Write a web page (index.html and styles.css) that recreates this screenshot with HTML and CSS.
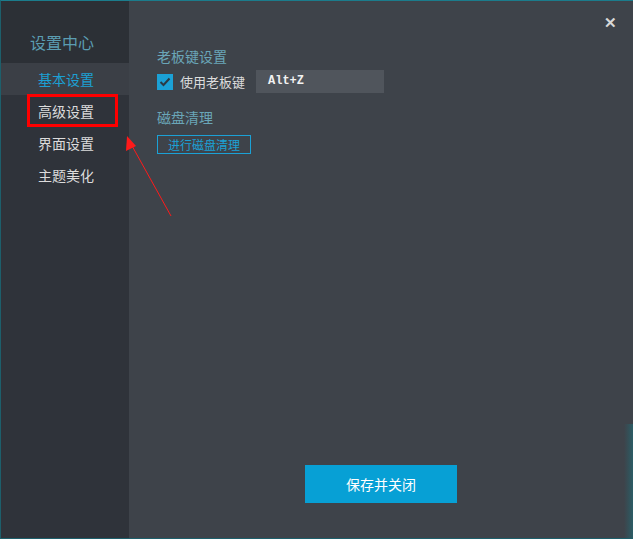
FILE: index.html
```html
<!DOCTYPE html>
<html lang="zh-CN">
<head>
    <meta charset="UTF-8">
    <title>设置中心</title>
    <link rel="stylesheet" href="styles.css">
</head>
<body>
    <div class="window">
        <!-- 左侧导航 -->
        <aside class="sidebar">
            <div class="sidebar-title">设置中心</div>
            <ul class="nav">
                <li class="nav-item active">基本设置</li>
                <li class="nav-item marked">高级设置</li>
                <li class="nav-item">界面设置</li>
                <li class="nav-item">主题美化</li>
            </ul>
        </aside>

        <main class="panel">
            <section class="group">
                <h3 class="group-title">老板键设置</h3>
                <div class="row">
                    <label class="check">
                        <span class="check-box">
                            <svg width="12" height="10" viewBox="0 0 12 10"><path d="M1.5 5 L4.5 8 L10.5 1.5" fill="none" stroke="#2b3a44" stroke-width="2"/></svg>
                        </span>
                        使用老板键
                    </label>
                    <div class="hotkey">Alt+Z</div>
                </div>
            </section>

            <section class="group">
                <h3 class="group-title">磁盘清理</h3>
                <button class="btn-line">进行磁盘清理</button>
            </section>

            <button class="btn-save">保存并关闭</button>
        </main>

        <span class="close">&#x2715;</span>
        <div class="edge-glow"></div>

        <!-- 标注箭头 -->
        <svg class="arrow" width="633" height="539" viewBox="0 0 633 539">
            <line x1="171" y1="216" x2="131" y2="144" stroke="#ff1a1a" stroke-width="1"/>
            <polygon points="127,136 126,151 136,146" fill="#ff1a1a"/>
        </svg>
    </div>
</body>
</html>
```

FILE: styles.css
```css
*, *::before, *::after {
    box-sizing: border-box;
}
body {
    margin: 0;
    font-family: "Noto Sans CJK SC", "Liberation Sans", sans-serif;
    background-color: #3e434a;
}
.window {
    position: relative;
    display: flex;
    width: 633px;
    height: 539px;
    background-color: #3e434a;
    border-top: 1px solid #1b7c8c;
    border-left: 1px solid #1d5f6b;
    border-bottom: 1px solid #1d5f6b;
    overflow: hidden;
}

/* 左侧导航 */
.sidebar {
    width: 128px;
    flex-shrink: 0;
    background-color: #2f333a;
}
.sidebar-title {
    height: 62px;
    padding: 29px 0 0 29px;
    font-size: 16px;
    line-height: 24px;
    color: #5b9db2;
    background-color: #2c3036;
}
.nav {
    list-style: none;
    margin: 0;
    padding: 0;
}
.nav-item {
    position: relative;
    height: 32px;
    padding-left: 37px;
    font-size: 14px;
    line-height: 32px;
    color: #dcdcdc;
}
.nav-item.active {
    color: #1ba0d4;
    background-color: #3b3f46;
}
.nav-item.marked::after {
    content: "";
    position: absolute;
    left: 26px;
    top: -1px;
    width: 91px;
    height: 33px;
    border: 3px solid #ff0000;
}

/* 右侧设置面板 */
.panel {
    flex: 1;
    display: flex;
    flex-direction: column;
    padding: 45px 0 35px 28px;
}
.group {
    margin-bottom: 14px;
}
.group-title {
    margin: 0 0 4px;
    font-size: 14px;
    font-weight: normal;
    line-height: 20px;
    color: #6aa6b8;
}
.row {
    display: flex;
    align-items: center;
    gap: 11px;
}
.check {
    display: flex;
    align-items: center;
    gap: 7px;
    font-size: 13px;
    color: #dddddd;
}
.check-box {
    display: flex;
    align-items: center;
    justify-content: center;
    width: 16px;
    height: 16px;
    background-color: #1ba1d6;
}
.hotkey {
    width: 128px;
    height: 23px;
    padding-left: 12px;
    font-family: "Liberation Mono", monospace;
    font-size: 12px;
    font-weight: bold;
    line-height: 23px;
    color: #f2f2f2;
    background-color: #50555c;
}
.btn-line {
    width: 94px;
    height: 19px;
    padding: 0;
    font-family: inherit;
    font-size: 12px;
    line-height: 17px;
    color: #1ba1d6;
    background: transparent;
    border: 1px solid #1ba1d6;
}
.btn-save {
    margin-top: auto;
    align-self: center;
    margin-left: -28px;
    width: 152px;
    height: 38px;
    font-family: inherit;
    font-size: 14px;
    color: #ffffff;
    background-color: #07a0d5;
    border: none;
}

.close {
    position: absolute;
    top: 10px;
    right: 16px;
    font-size: 15px;
    font-weight: bold;
    color: #d8d8d8;
}
.edge-glow {
    position: absolute;
    right: 0;
    bottom: 0;
    width: 9px;
    height: 114px;
    background: linear-gradient(to right, rgba(30, 110, 120, 0), rgba(30, 110, 120, 0.6));
}
.arrow {
    position: absolute;
    left: -1px;
    top: -1px;
    pointer-events: none;
}
```
